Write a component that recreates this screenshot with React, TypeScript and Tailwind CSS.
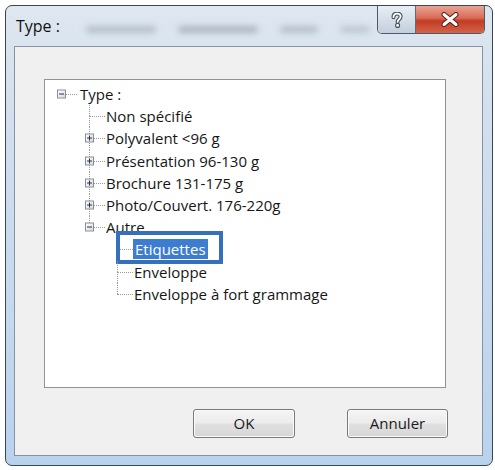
type Node = {
  label: string
  depth: number
  box?: "plus" | "minus"
  last?: boolean
  selected?: boolean
}

const nodes: Node[] = [
  { label: "Type :", depth: 0, box: "minus", last: true },
  { label: "Non spécifié", depth: 1 },
  { label: "Polyvalent <96 g", depth: 1, box: "plus" },
  { label: "Présentation 96-130 g", depth: 1, box: "plus" },
  { label: "Brochure 131-175 g", depth: 1, box: "plus" },
  { label: "Photo/Couvert. 176-220g", depth: 1, box: "plus" },
  { label: "Autre", depth: 1, box: "minus", last: true },
  { label: "Etiquettes", depth: 2, selected: true },
  { label: "Enveloppe", depth: 2 },
  { label: "Enveloppe à fort grammage", depth: 2, last: true },
]

const font = "font-['Open_Sans','Noto_Sans',sans-serif]"

export default function App() {
  return (
    <div className={`h-[470px] w-[495px] bg-white pl-[5px] pt-[5px] ${font}`}>
      <div className="flex h-[461px] w-[488px] flex-col overflow-hidden rounded-[7px] border border-[#3a4656] bg-[linear-gradient(180deg,#dfe7f0_0%,#d3e0ee_20%,#c4d8ee_70%,#b9d2ec_100%)]">
        <TitleBar />
        <div className="pb-[9px] pl-[8px] pr-[9px]">
          <div className="flex h-[410px] w-[469px] flex-col border border-[#8593a4] bg-[#f0f0f0]">
            <div className="ml-[29px] mt-[32px] h-[309px] w-[402px] border border-[#8e939a] bg-white pl-[2px] pt-[3px]">
              {nodes.map((node) => (
                <TreeRow key={node.label} node={node} />
              ))}
            </div>
            <div className="mr-[34px] mt-[21px] flex justify-end gap-[52px]">
              <DialogButton label="OK" width="w-[102px]" />
              <DialogButton label="Annuler" width="w-[101px]" />
            </div>
          </div>
        </div>
      </div>
    </div>
  )
}

function TitleBar() {
  return (
    <div className="relative flex h-[40px] items-start justify-between">
      {/* blurred content of the window behind the glass */}
      <div className="absolute left-[80px] top-[20px] flex items-center gap-[22px] opacity-50 blur-[3px]">
        <span className="h-[7px] w-[70px] rounded bg-[#8e98a4]" />
        <span className="h-[7px] w-[80px] rounded bg-[#7c8693]" />
        <span className="h-[7px] w-[38px] rounded bg-[#8e98a4]" />
        <span className="h-[7px] w-[30px] rounded bg-[#a0a9b4]" />
      </div>
      <span className="relative ml-[10px] mt-[10px] text-[16px] leading-[20px] text-[#111]">Type :</span>
      <div className="relative mr-[7px] flex h-[28px] overflow-hidden rounded-b-[5px] border border-t-0 border-[#4d5a6a]">
        <div className="flex w-[38px] items-center justify-center border-r border-[#5d6b7b] bg-[linear-gradient(180deg,#e8eef5_0%,#d6dee8_50%,#c3cfdc_100%)]">
          <svg width="14" height="16" viewBox="0 0 14 16">
            <path d="M3.5 5.2 C3.5 2.6 5 1.6 7 1.6 C9.2 1.6 10.6 2.8 10.6 4.8 C10.6 7.2 7.6 7.4 7.6 10" fill="none" stroke="#45505d" strokeWidth="4" strokeLinecap="round" />
            <path d="M3.5 5.2 C3.5 2.6 5 1.6 7 1.6 C9.2 1.6 10.6 2.8 10.6 4.8 C10.6 7.2 7.6 7.4 7.6 10" fill="none" stroke="#ffffff" strokeWidth="1.8" strokeLinecap="round" />
            <circle cx="7.6" cy="13.4" r="2" fill="#ffffff" stroke="#45505d" strokeWidth="1.1" />
          </svg>
        </div>
        <div className="flex w-[68px] items-center justify-center bg-[linear-gradient(180deg,#e9a493_0%,#d86a55_45%,#c33b25_55%,#d3634a_100%)]">
          <svg width="18" height="15" viewBox="0 0 18 15">
            <path d="M3 2.5 L15 12.5 M15 2.5 L3 12.5" stroke="#5a2218" strokeWidth="5" strokeLinecap="round" />
            <path d="M3 2.5 L15 12.5 M15 2.5 L3 12.5" stroke="#ffffff" strokeWidth="3" strokeLinecap="round" />
          </svg>
        </div>
      </div>
    </div>
  )
}

function TreeRow({ node }: { node: Node }) {
  const spacers = Array.from({ length: node.depth })
  return (
    <div className="flex h-[22.2px] items-center">
      {spacers.map((_, i) => (
        <div key={i} className="h-full w-[28px] shrink-0" />
      ))}
      <div className="relative h-full w-[28px] shrink-0">
        {node.depth > 0 && <span className="absolute left-[14px] top-0 h-1/2 border-l border-dotted border-[#9a9a9a]" />}
        {node.depth > 0 && !node.last && (
          <span className="absolute bottom-0 left-[14px] top-1/2 border-l border-dotted border-[#9a9a9a]" />
        )}
        <span className="absolute left-[14px] right-[-2px] top-1/2 border-t border-dotted border-[#9a9a9a]" />
        {node.box && <ExpandBox open={node.box === "minus"} />}
      </div>
      {node.selected ? (
        <div className="relative ml-[2px]">
          <span className="bg-[#3d7dd0] px-[2px] text-[15px] leading-[18px] text-white">{node.label}</span>
          {/* highlight frame around the selected entry */}
          <span className="absolute left-[-17px] top-[-6px] h-[33px] w-[107px] border-[4px] border-[#3470bd]" />
        </div>
      ) : (
        <span className={`${node.depth === 0 ? "ml-[5px]" : "ml-[3px]"} text-[15px] leading-[18px] text-[#161616]`}>
          {node.label}
        </span>
      )}
    </div>
  )
}

function ExpandBox({ open }: { open: boolean }) {
  return (
    <span className="absolute left-[10px] top-1/2 flex h-[9px] w-[9px] -translate-y-1/2 items-center justify-center border border-[#8a8e94] bg-[linear-gradient(135deg,#ffffff,#d6d9de)]">
      <span className="absolute h-px w-[5px] bg-[#24344c]" />
      {!open && <span className="absolute h-[5px] w-px bg-[#24344c]" />}
    </span>
  )
}

function DialogButton({ label, width }: { label: string; width: string }) {
  return (
    <button
      className={`${width} h-[29px] rounded-[3px] border border-[#7a7a7a] bg-[linear-gradient(180deg,#f4f4f4_0%,#ececec_48%,#e0e0e0_52%,#d6d6d6_100%)] text-[15px] text-[#1a1a1a] shadow-[inset_0_0_0_1px_#fbfbfb]`}
    >
      {label}
    </button>
  )
}
